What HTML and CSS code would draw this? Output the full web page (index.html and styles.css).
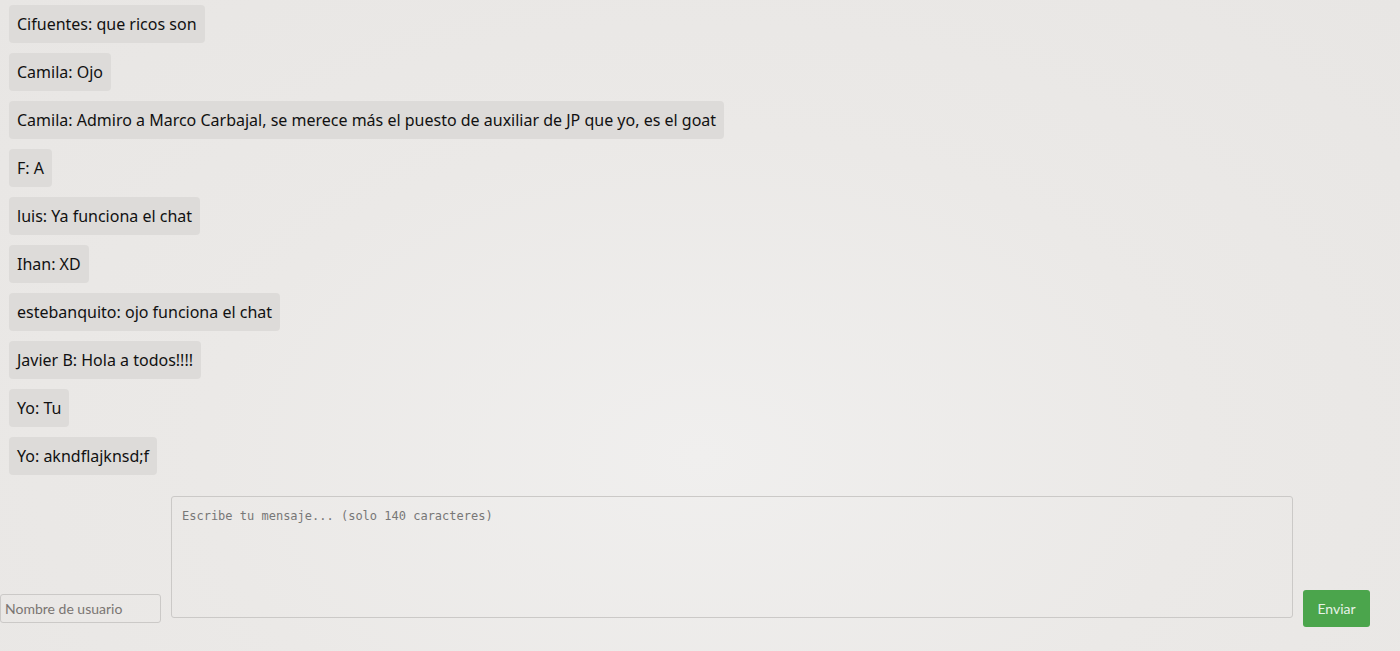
FILE: index.html
```html
<!DOCTYPE html>
<html lang="es">
<head>
<meta charset="utf-8">
<title>Chat</title>
<link rel="stylesheet" href="styles.css">
</head>
<body>
<div class="messages">
  <div class="msg">Cifuentes: que ricos son</div>
  <div class="msg">Camila: Ojo</div>
  <div class="msg">Camila: Admiro a Marco Carbajal, se merece más el puesto de auxiliar de JP que yo, es el goat</div>
  <div class="msg">F: A</div>
  <div class="msg">luis: Ya funciona el chat</div>
  <div class="msg">Ihan: XD</div>
  <div class="msg">estebanquito: ojo funciona el chat</div>
  <div class="msg">Javier B: Hola a todos!!!!</div>
  <div class="msg">Yo: Tu</div>
  <div class="msg">Yo: akndflajknsd;f</div>
</div>
<form class="composer">
  <input class="user" type="text" placeholder="Nombre de usuario">
  <textarea class="text" placeholder="Escribe tu mensaje... (solo 140 caracteres)"></textarea>
  <button class="send" type="button">Enviar</button>
</form>
</body>
</html>
```
FILE: styles.css
```css
html, body {
  margin: 0;
  padding: 0;
}
body {
  background: radial-gradient(ellipse at 50% 70%, #f0efee 0%, #ebe9e7 50%, #e8e6e4 100%);
  min-height: 651px;
  font-family: "Noto Sans", "Open Sans", sans-serif;
  color: #111;
}
.messages {
  display: flex;
  flex-direction: column;
  align-items: flex-start;
  gap: 10px;
  padding: 5px 0 0 9px;
}
.msg {
  background: #dddbd9;
  border-radius: 4px;
  padding: 8px 8px;
  font-size: 16px;
  line-height: 22px;
}
.composer {
  display: flex;
  align-items: flex-end;
  margin: 21px 0 0 0;
}
.user {
  box-sizing: border-box;
  width: 161px;
  height: 29px;
  margin: 0 10px 4px 0;
  padding: 0 4px;
  border: 1px solid #cbc9c7;
  border-radius: 3px;
  background: transparent;
  font-family: Lato, sans-serif;
  font-size: 14px;
}
.user::placeholder { color: #7a7572; }
.text {
  box-sizing: border-box;
  width: 1122px;
  height: 122px;
  margin: 0 10px 9px 0;
  padding: 12px 10px;
  border: 1px solid #cbc9c7;
  border-radius: 3px;
  background: transparent;
  font-family: "DejaVu Sans Mono", monospace;
  font-size: 12px;
  resize: none;
}
.text::placeholder { color: #777; }
.send {
  box-sizing: border-box;
  width: 67px;
  height: 37px;
  border: none;
  border-radius: 3px;
  background: #4ba54c;
  color: #e8f2e8;
  font-family: Lato, sans-serif;
  font-size: 14px;
  padding: 0;
}
```
